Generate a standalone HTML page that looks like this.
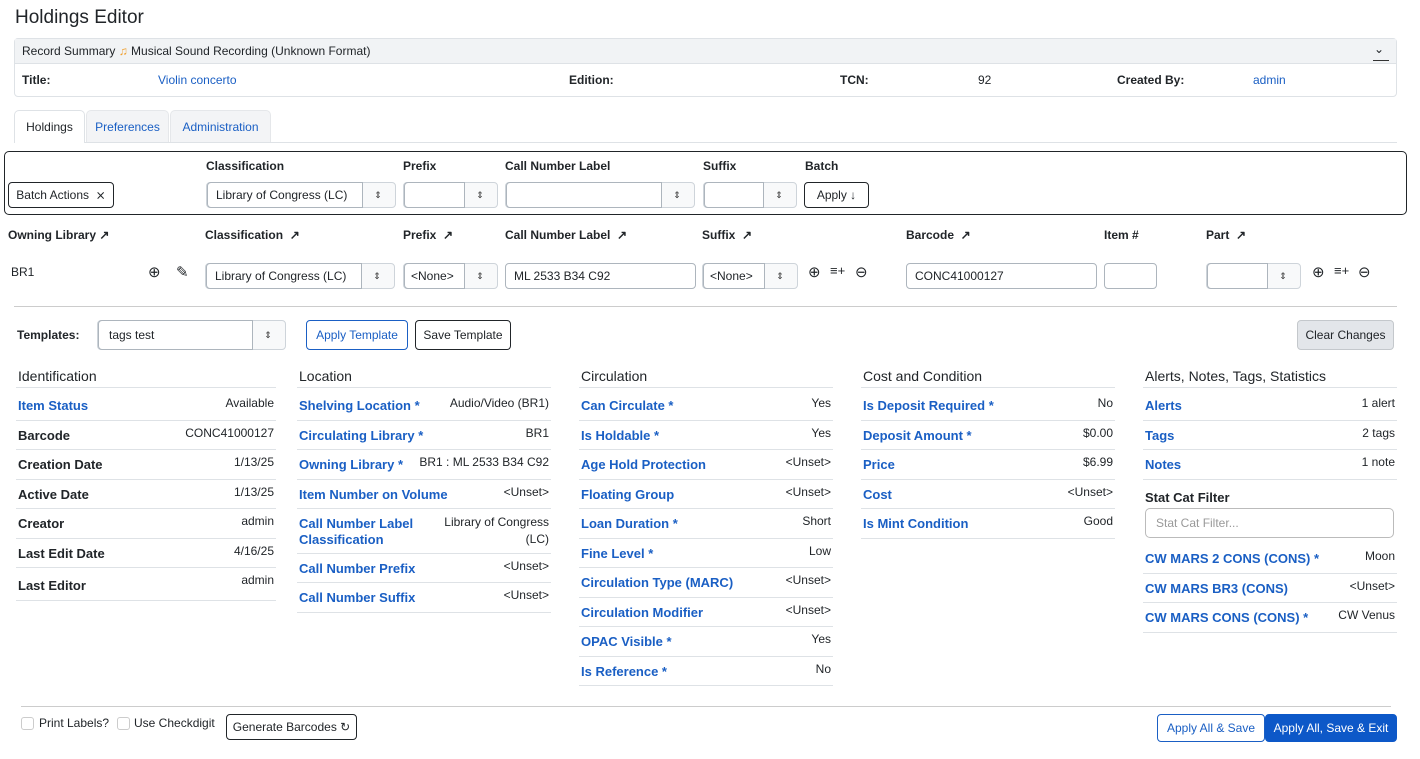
<!DOCTYPE html>
<html><head><meta charset="utf-8"><style>
*{box-sizing:border-box;margin:0;padding:0}
body{width:1420px;height:759px;position:relative;background:#fff;font-family:"Liberation Sans",Arial,sans-serif;font-size:12px;color:#212529;overflow:hidden}
.a{position:absolute}
.lb{font-weight:bold;font-size:12px}
.link{color:#1a5fc4}
.r{position:absolute;border-bottom:1px solid #dee2e6}
.r b{position:absolute;left:2px;top:7px;font-size:13px;line-height:16px;color:#1a5fc4}
.r b.k{color:#212529}
.r span{position:absolute;right:2px;top:5px;font-size:12px;line-height:15px;text-align:right}
.h{position:absolute;font-size:14px;line-height:18px;border-bottom:1px solid #dee2e6;padding-left:2px}
.inp{position:absolute;border:1px solid #adb5bd;border-radius:4px;background:#fff;font-size:12px;line-height:24px;padding-left:8px;height:26px}
.sel{position:absolute;border:1px solid #ced4da;border-radius:4px;background:#f8f9fa;height:26px}
.sel .t{position:absolute;left:0;top:-1px;bottom:-1px;border:1px solid #adb5bd;border-radius:4px 0 0 4px;background:#fff;font-size:12px;line-height:24px;padding-left:8px;white-space:nowrap;overflow:hidden}
.sel .ar{position:absolute;right:0;top:0;width:34px;height:24px;text-align:center;line-height:24px;font-size:9px;color:#333}
.btn{position:absolute;border:1px solid #212529;border-radius:4px;background:#fff;font-size:12px;text-align:center}
.ic{position:absolute;font-size:15px}
</style></head><body>
<div class="a" style="left:15px;top:7px;font-size:19px;line-height:22px">Holdings Editor</div>

<div class="a" style="left:14px;top:38px;width:1383px;height:59px;border:1px solid #dee2e6;border-radius:4px"></div>
<div class="a" style="left:15px;top:39px;width:1381px;height:25px;background:#f1f3f5;border-bottom:1px solid #dee2e6"></div>
<div class="a" style="left:22px;top:44px;font-size:12px;line-height:15px">Record Summary <span style="color:#f0a030">&#9835;</span> Musical Sound Recording (Unknown Format)</div>
<div class="a" style="left:1374px;top:42px;font-size:12px">&#8964;</div>
<div class="a" style="left:1373px;top:60px;width:16px;border-top:1px solid #333"></div>
<div class="a lb" style="left:22px;top:73px">Title:</div>
<div class="a link" style="left:158px;top:73px">Violin concerto</div>
<div class="a lb" style="left:569px;top:73px">Edition:</div>
<div class="a lb" style="left:840px;top:73px">TCN:</div>
<div class="a" style="left:978px;top:73px">92</div>
<div class="a lb" style="left:1117px;top:73px">Created By:</div>
<div class="a link" style="left:1253px;top:73px">admin</div>

<div class="a" style="left:14px;top:142px;width:1383px;border-top:1px solid #dee2e6"></div>
<div class="a" style="left:14px;top:110px;width:71px;height:33px;border:1px solid #dee2e6;border-bottom:none;border-radius:5px 5px 0 0;background:#fff;text-align:center;line-height:32px">Holdings</div>
<div class="a link" style="left:86px;top:110px;width:83px;height:32px;border:1px solid #e5e7ea;border-bottom:none;border-radius:5px 5px 0 0;background:#f3f4f6;text-align:center;line-height:32px">Preferences</div>
<div class="a link" style="left:170px;top:110px;width:101px;height:32px;border:1px solid #e5e7ea;border-bottom:none;border-radius:5px 5px 0 0;background:#f3f4f6;text-align:center;line-height:32px">Administration</div>

<div class="a" style="left:4px;top:151px;width:1403px;height:64px;border:1px solid #212529;border-radius:5px"></div>
<div class="a lb" style="left:206px;top:159px">Classification</div>
<div class="a lb" style="left:403px;top:159px">Prefix</div>
<div class="a lb" style="left:505px;top:159px">Call Number Label</div>
<div class="a lb" style="left:703px;top:159px">Suffix</div>
<div class="a lb" style="left:805px;top:159px">Batch</div>
<div class="btn" style="left:8px;top:182px;width:106px;height:26px;line-height:24px">Batch Actions &nbsp;&#10799;</div>
<div class="sel" style="left:206px;top:182px;width:190px"><div class="t" style="width:156px">Library of Congress (LC)</div><div class="ar">&#8661;</div></div>
<div class="sel" style="left:403px;top:182px;width:95px"><div class="t" style="width:61px"></div><div class="ar">&#8661;</div></div>
<div class="sel" style="left:505px;top:182px;width:190px"><div class="t" style="width:156px"></div><div class="ar">&#8661;</div></div>
<div class="sel" style="left:703px;top:182px;width:94px"><div class="t" style="width:60px"></div><div class="ar">&#8661;</div></div>
<div class="btn" style="left:804px;top:182px;width:65px;height:26px;line-height:24px">Apply &#8595;</div>

<div class="a lb" style="left:8px;top:228px">Owning Library &#8599;</div>
<div class="a lb" style="left:205px;top:228px">Classification &nbsp;&#8599;</div>
<div class="a lb" style="left:403px;top:228px">Prefix &nbsp;&#8599;</div>
<div class="a lb" style="left:505px;top:228px">Call Number Label &nbsp;&#8599;</div>
<div class="a lb" style="left:702px;top:228px">Suffix &nbsp;&#8599;</div>
<div class="a lb" style="left:906px;top:228px">Barcode &nbsp;&#8599;</div>
<div class="a lb" style="left:1104px;top:228px">Item #</div>
<div class="a lb" style="left:1206px;top:228px">Part &nbsp;&#8599;</div>
<div class="a" style="left:11px;top:265px">BR1</div>
<div class="ic" style="left:148px;top:263px">&#8853;</div>
<div class="ic" style="left:176px;top:263px">&#9998;</div>
<div class="sel" style="left:205px;top:263px;width:190px"><div class="t" style="width:156px">Library of Congress (LC)</div><div class="ar">&#8661;</div></div>
<div class="sel" style="left:403px;top:263px;width:95px"><div class="t" style="width:61px;padding-left:6px">&lt;None&gt;</div><div class="ar">&#8661;</div></div>
<div class="inp" style="left:505px;top:263px;width:191px">ML 2533 B34 C92</div>
<div class="sel" style="left:702px;top:263px;width:96px"><div class="t" style="width:62px;padding-left:6px">&lt;None&gt;</div><div class="ar">&#8661;</div></div>
<div class="ic" style="left:808px;top:263px">&#8853;</div>
<div class="ic" style="left:830px;top:263px;font-size:13px">&#8801;+</div>
<div class="ic" style="left:855px;top:263px">&#8854;</div>
<div class="inp" style="left:906px;top:263px;width:191px">CONC41000127</div>
<div class="inp" style="left:1104px;top:263px;width:53px"></div>
<div class="sel" style="left:1206px;top:263px;width:95px"><div class="t" style="width:61px"></div><div class="ar">&#8661;</div></div>
<div class="ic" style="left:1312px;top:263px">&#8853;</div>
<div class="ic" style="left:1334px;top:263px;font-size:13px">&#8801;+</div>
<div class="ic" style="left:1358px;top:263px">&#8854;</div>

<div class="a" style="left:14px;top:306px;width:1383px;border-top:1px solid #ccc"></div>

<div class="a lb" style="left:17px;top:328px">Templates:</div>
<div class="sel" style="left:97px;top:320px;width:189px;height:30px"><div class="t" style="width:155px;line-height:28px;padding-left:10px">tags test</div><div class="ar" style="line-height:28px;height:28px">&#8661;</div></div>
<div class="btn link" style="left:306px;top:320px;width:102px;height:30px;line-height:28px;border-color:#1a5fc4">Apply Template</div>
<div class="btn" style="left:415px;top:320px;width:96px;height:30px;line-height:28px">Save Template</div>
<div class="btn" style="left:1297px;top:320px;width:97px;height:30px;line-height:28px;background:#e3e6ea;border-color:#c4c8cc">Clear Changes</div>

<!-- Identification -->
<div class="h" style="left:16px;top:367px;width:260px;height:21px">Identification</div>
<div class="r" style="left:16px;top:391px;width:260px;height:30px"><b>Item Status</b><span>Available</span></div>
<div class="r" style="left:16px;top:421px;width:260px;height:29px"><b class="k">Barcode</b><span>CONC41000127</span></div>
<div class="r" style="left:16px;top:450px;width:260px;height:30px"><b class="k">Creation Date</b><span>1/13/25</span></div>
<div class="r" style="left:16px;top:480px;width:260px;height:29px"><b class="k">Active Date</b><span>1/13/25</span></div>
<div class="r" style="left:16px;top:509px;width:260px;height:30px"><b class="k">Creator</b><span>admin</span></div>
<div class="r" style="left:16px;top:539px;width:260px;height:29px"><b class="k">Last Edit Date</b><span>4/16/25</span></div>
<div class="r" style="left:16px;top:568px;width:260px;height:33px"><b class="k" style="top:10px">Last Editor</b><span>admin</span></div>

<!-- Location -->
<div class="h" style="left:297px;top:367px;width:254px;height:21px">Location</div>
<div class="r" style="left:297px;top:391px;width:254px;height:30px"><b>Shelving Location *</b><span>Audio/Video (BR1)</span></div>
<div class="r" style="left:297px;top:421px;width:254px;height:29px"><b>Circulating Library *</b><span>BR1</span></div>
<div class="r" style="left:297px;top:450px;width:254px;height:30px"><b>Owning Library *</b><span>BR1 : ML 2533 B34 C92</span></div>
<div class="r" style="left:297px;top:480px;width:254px;height:29px"><b>Item Number on Volume</b><span>&lt;Unset&gt;</span></div>
<div class="r" style="left:297px;top:509px;width:254px;height:45px"><b>Call Number Label<br>Classification</b><span style="line-height:17px">Library of Congress<br>(LC)</span></div>
<div class="r" style="left:297px;top:554px;width:254px;height:29px"><b>Call Number Prefix</b><span>&lt;Unset&gt;</span></div>
<div class="r" style="left:297px;top:583px;width:254px;height:30px"><b>Call Number Suffix</b><span>&lt;Unset&gt;</span></div>

<!-- Circulation -->
<div class="h" style="left:579px;top:367px;width:254px;height:21px">Circulation</div>
<div class="r" style="left:579px;top:391px;width:254px;height:30px"><b>Can Circulate *</b><span>Yes</span></div>
<div class="r" style="left:579px;top:421px;width:254px;height:29px"><b>Is Holdable *</b><span>Yes</span></div>
<div class="r" style="left:579px;top:450px;width:254px;height:30px"><b>Age Hold Protection</b><span>&lt;Unset&gt;</span></div>
<div class="r" style="left:579px;top:480px;width:254px;height:29px"><b>Floating Group</b><span>&lt;Unset&gt;</span></div>
<div class="r" style="left:579px;top:509px;width:254px;height:30px"><b>Loan Duration *</b><span>Short</span></div>
<div class="r" style="left:579px;top:539px;width:254px;height:29px"><b>Fine Level *</b><span>Low</span></div>
<div class="r" style="left:579px;top:568px;width:254px;height:30px"><b>Circulation Type (MARC)</b><span>&lt;Unset&gt;</span></div>
<div class="r" style="left:579px;top:598px;width:254px;height:29px"><b>Circulation Modifier</b><span>&lt;Unset&gt;</span></div>
<div class="r" style="left:579px;top:627px;width:254px;height:30px"><b>OPAC Visible *</b><span>Yes</span></div>
<div class="r" style="left:579px;top:657px;width:254px;height:29px"><b>Is Reference *</b><span>No</span></div>

<!-- Cost -->
<div class="h" style="left:861px;top:367px;width:254px;height:21px">Cost and Condition</div>
<div class="r" style="left:861px;top:391px;width:254px;height:30px"><b>Is Deposit Required *</b><span>No</span></div>
<div class="r" style="left:861px;top:421px;width:254px;height:29px"><b>Deposit Amount *</b><span>$0.00</span></div>
<div class="r" style="left:861px;top:450px;width:254px;height:30px"><b>Price</b><span>$6.99</span></div>
<div class="r" style="left:861px;top:480px;width:254px;height:29px"><b>Cost</b><span>&lt;Unset&gt;</span></div>
<div class="r" style="left:861px;top:509px;width:254px;height:30px"><b>Is Mint Condition</b><span>Good</span></div>

<!-- Alerts -->
<div class="h" style="left:1143px;top:367px;width:254px;height:21px">Alerts, Notes, Tags, Statistics</div>
<div class="r" style="left:1143px;top:391px;width:254px;height:30px"><b>Alerts</b><span>1 alert</span></div>
<div class="r" style="left:1143px;top:421px;width:254px;height:29px"><b>Tags</b><span>2 tags</span></div>
<div class="r" style="left:1143px;top:450px;width:254px;height:30px"><b>Notes</b><span>1 note</span></div>
<div class="a" style="left:1145px;top:490px;font-weight:bold;font-size:13px;line-height:16px">Stat Cat Filter</div>
<div class="a" style="left:1145px;top:508px;width:249px;height:30px;border:1px solid #bbb;border-radius:5px;color:#999;line-height:28px;padding-left:10px">Stat Cat Filter...</div>
<div class="r" style="left:1143px;top:544px;width:254px;height:30px"><b>CW MARS 2 CONS (CONS) *</b><span>Moon</span></div>
<div class="r" style="left:1143px;top:574px;width:254px;height:29px"><b>CW MARS BR3 (CONS)</b><span>&lt;Unset&gt;</span></div>
<div class="r" style="left:1143px;top:603px;width:254px;height:30px"><b>CW MARS CONS (CONS) *</b><span>CW Venus</span></div>

<div class="a" style="left:21px;top:706px;width:1370px;border-top:1px solid #ccc"></div>
<div class="a" style="left:21px;top:717px;width:13px;height:13px;border:1px solid #ccc;border-radius:3px"></div>
<div class="a" style="left:39px;top:716px">Print Labels?</div>
<div class="a" style="left:117px;top:717px;width:13px;height:13px;border:1px solid #ccc;border-radius:3px"></div>
<div class="a" style="left:134px;top:716px">Use Checkdigit</div>
<div class="btn" style="left:226px;top:714px;width:131px;height:26px;line-height:24px">Generate Barcodes &#8635;</div>
<div class="btn link" style="left:1157px;top:714px;width:108px;height:28px;line-height:26px;border-color:#1a5fc4">Apply All &amp; Save</div>
<div class="btn" style="left:1265px;top:714px;width:132px;height:28px;line-height:26px;background:#0d58c8;border-color:#0d58c8;color:#fff">Apply All, Save &amp; Exit</div>
</body></html>
